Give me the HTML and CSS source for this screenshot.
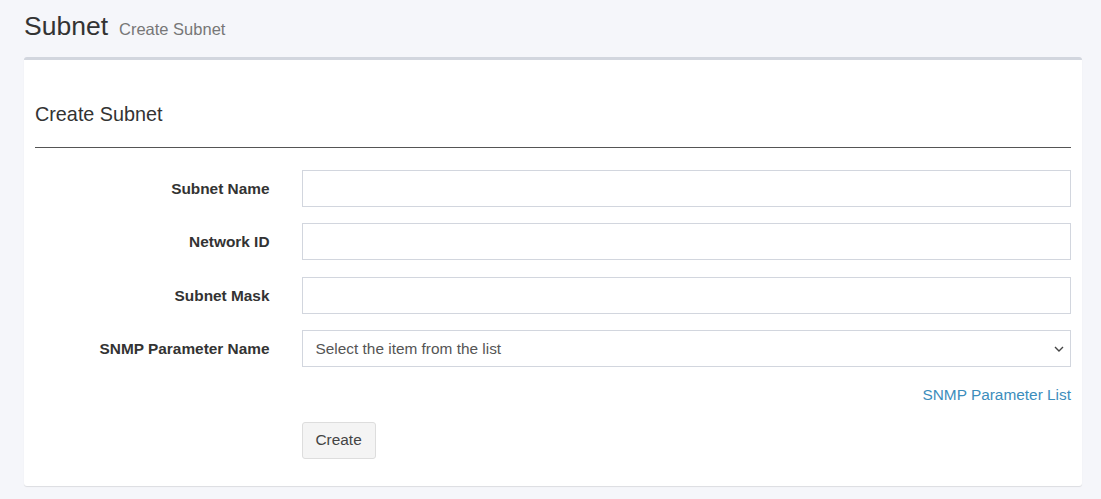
FILE: index.html
```html
<!DOCTYPE html>
<html lang="en">
<head>
  <meta charset="UTF-8">
  <title>Subnet - Create Subnet</title>
  <link rel="stylesheet" href="styles.css">
</head>
<body>
  <!-- Page header -->
  <section class="content-header">
    <h1>Subnet <small>Create Subnet</small></h1>
  </section>

  <!-- Form box -->
  <section class="content">
    <div class="box">
      <div class="box-body">
        <h3 class="box-title">Create Subnet</h3>
        <hr>

        <form class="form-horizontal">
          <div class="form-group">
            <label for="subnet-name">Subnet Name</label>
            <div class="field"><input type="text" id="subnet-name"></div>
          </div>
          <div class="form-group">
            <label for="network-id">Network ID</label>
            <div class="field"><input type="text" id="network-id"></div>
          </div>
          <div class="form-group">
            <label for="subnet-mask">Subnet Mask</label>
            <div class="field"><input type="text" id="subnet-mask"></div>
          </div>
          <div class="form-group">
            <label for="snmp-param">SNMP Parameter Name</label>
            <div class="field">
              <div class="select-wrap">
                <select id="snmp-param">
                  <option>Select the item from the list</option>
                </select>
                <svg class="caret" width="10" height="6" viewBox="0 0 10 6"><path d="M1 1l4 4 4-4" fill="none" stroke="#444" stroke-width="1.4"/></svg>
              </div>
              <div class="help-link"><a href="#">SNMP Parameter List</a></div>
            </div>
          </div>
          <div class="form-group">
            <span></span>
            <div class="field"><button type="button" class="btn">Create</button></div>
          </div>
        </form>
      </div>
    </div>
  </section>
</body>
</html>
```

FILE: styles.css
```css
body {
  margin: 0;
  background-color: #f5f6fa;
  font-family: "Liberation Sans", Arial, sans-serif;
  font-size: 15.4px;
  color: #333;
}

/* Header */
.content-header {
  padding: 10px 24px 0;
}

.content-header h1 {
  display: flex;
  align-items: baseline;
  margin: 0;
  font-size: 26.5px;
  font-weight: normal;
  line-height: 32px;
}

.content-header small {
  margin-left: 11px;
  font-size: 16.5px;
  line-height: 1;
  color: #777;
}

/* Box */
.content {
  padding: 15px 19px 13px 24px;
}

.box {
  background: #fff;
  border-top: 3px solid #d2d6de;
  border-radius: 3px;
  box-shadow: 0 1px 1px rgba(0, 0, 0, 0.1);
}

.box-body {
  padding: 1px 11px 11px;
}

.box-title {
  margin: 42px 0 0;
  font-size: 19.8px;
  font-weight: normal;
  line-height: 22px;
}

hr {
  margin: 22px 0 22px;
  border: 0;
  border-top: 1px solid #555;
}

/* Form rows */
.form-horizontal {
  margin: 0 -15px;
}

.form-group {
  display: grid;
  grid-template-columns: 25% 75%;
  margin-bottom: 16.4px;
}

.form-group label {
  padding: 0 17px 0 15px;
  text-align: right;
  font-weight: bold;
  line-height: 37px;
}

.field {
  padding: 0 15px;
}

.field input,
.field select {
  box-sizing: border-box;
  width: 100%;
  height: 37px;
  padding: 6px 13px;
  font-family: inherit;
  font-size: 15.4px;
  color: #555;
  background: #fff;
  border: 1px solid #d2d6de;
  border-radius: 0;
  outline: none;
}

.select-wrap {
  position: relative;
}

.field select {
  appearance: none;
  -webkit-appearance: none;
}

.caret {
  position: absolute;
  right: 7px;
  top: 16px;
}

.help-link {
  text-align: right;
  margin-top: 19px;
  line-height: 18px;
}

.help-link a {
  color: #3c8dbc;
  text-decoration: none;
}

.btn {
  margin-top: 1px;
  height: 37px;
  padding: 0 13px;
  font-family: inherit;
  font-size: 15.4px;
  color: #444;
  background: #f4f4f4;
  border: 1px solid #ddd;
  border-radius: 3px;
}
```
